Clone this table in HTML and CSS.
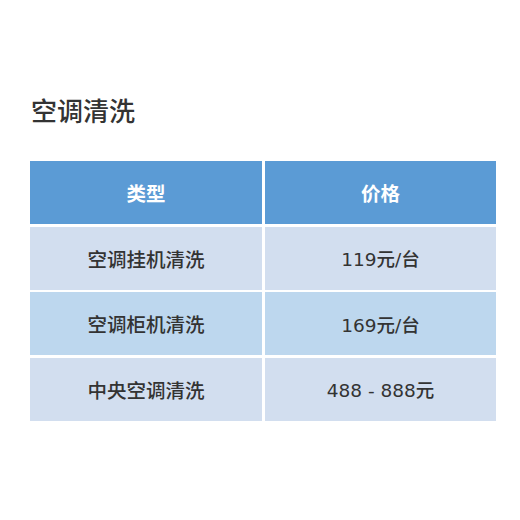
FILE: index.html
```html
<!DOCTYPE html>
<html lang="zh-CN">
<head>
<meta charset="utf-8">
<link rel="stylesheet" href="styles.css">
</head>
<body>
<div class="page">
  <h1 class="title">空调清洗</h1>
  <div class="table">
    <div class="cell head">类型</div>
    <div class="cell head">价格</div>
    <div class="cell odd name">空调挂机清洗</div>
    <div class="cell odd">119元/台</div>
    <div class="cell even name">空调柜机清洗</div>
    <div class="cell even">169元/台</div>
    <div class="cell odd name">中央空调清洗</div>
    <div class="cell odd">488 - 888元</div>
  </div>
</div>
</body>
</html>
```
FILE: styles.css
```css
html, body {
  margin: 0;
  padding: 0;
  background: #ffffff;
}
.page {
  padding: 94px 24px 0 30px;
  font-family: "DejaVu Sans", "Noto Sans CJK SC", sans-serif;
  color: #333333;
}
.title {
  margin: 0 0 31px 1px;
  font-size: 26px;
  line-height: 36px;
  font-weight: 500;
  color: #333333;
}
.table {
  display: grid;
  grid-template-columns: 232px 231px;
  grid-auto-rows: 63px;
  column-gap: 3px;
  row-gap: 2.5px;
  width: 466px;
}
.cell {
  display: flex;
  align-items: center;
  justify-content: center;
  font-size: 18.5px;
  font-weight: 500;
}
.name {
  font-size: 19.5px;
}
.head {
  background: #5b9bd5;
  color: #ffffff;
  font-size: 19.5px;
  font-weight: 700;
}
.odd {
  background: #d2deef;
}
.even {
  background: #bdd7ee;
}
```
